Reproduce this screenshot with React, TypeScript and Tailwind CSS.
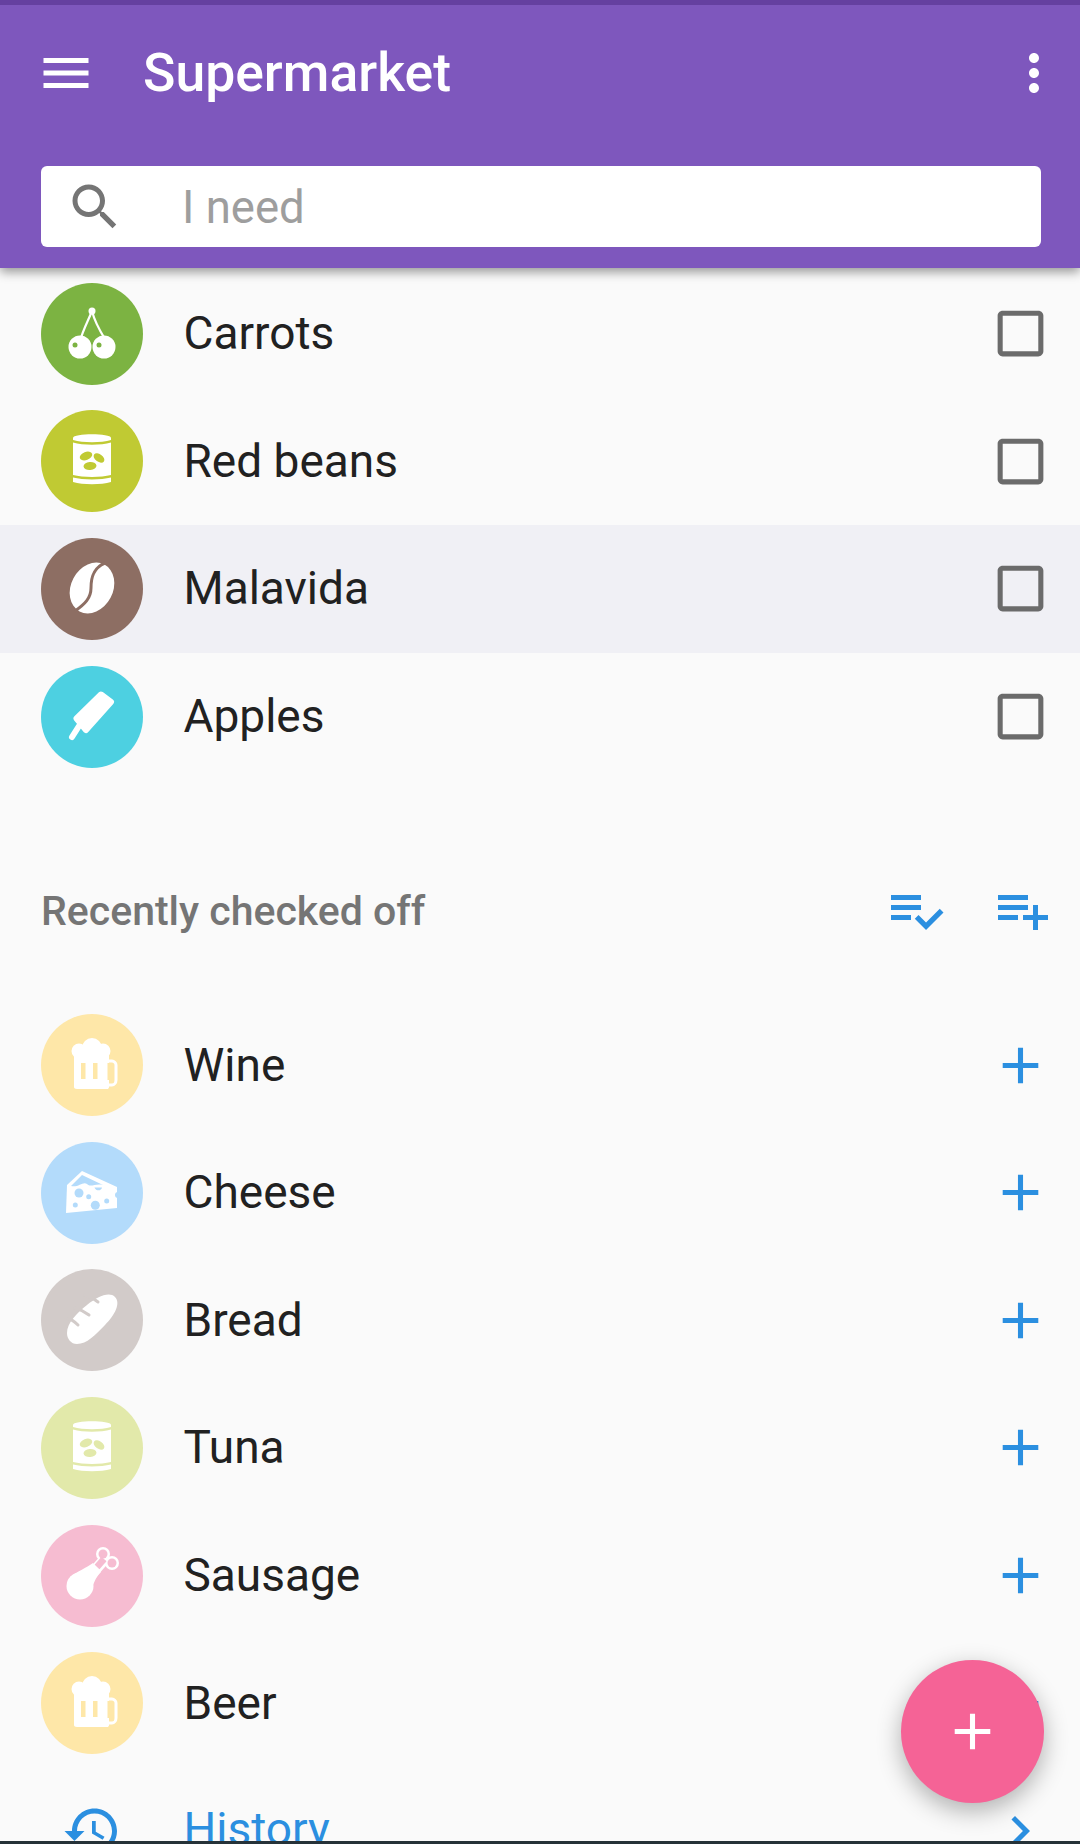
import React from 'react'

type IconProps = { d: string; className?: string }

// Material icon on a 24 unit grid
function Mi({ d, className }: IconProps) {
  return (
    <svg viewBox="0 0 24 24" className={className} fill="currentColor">
      <path d={d} />
    </svg>
  )
}

const ICONS = {
  menu: 'M3 18h18v-2H3v2zm0-5h18v-2H3v2zm0-7v2h18V6H3z',
  search:
    'M15.5 14h-.79l-.28-.27C15.41 12.59 16 11.11 16 9.5 16 5.91 13.09 3 9.5 3S3 5.91 3 9.5 5.91 16 9.5 16c1.61 0 3.09-.59 4.23-1.57l.27.28v.79l5 4.99L20.49 19l-4.99-5zm-6 0C7.01 14 5 11.99 5 9.5S7.01 5 9.5 5 14 7.01 14 9.5 11.99 14 9.5 14z',
  more: 'M12 8c1.1 0 2-.9 2-2s-.9-2-2-2-2 .9-2 2 .9 2 2 2zm0 2c-1.1 0-2 .9-2 2s.9 2 2 2 2-.9 2-2-.9-2-2-2zm0 6c-1.1 0-2 .9-2 2s.9 2 2 2 2-.9 2-2-.9-2-2-2z',
  box: 'M19 5v14H5V5h14m0-2H5c-1.1 0-2 .9-2 2v14c0 1.1.9 2 2 2h14c1.1 0 2-.9 2-2V5c0-1.1-.9-2-2-2z',
  add: 'M19 13h-6v6h-2v-6H5v-2h6V5h2v6h6v2z',
  listCheck:
    'M14 10H2v2h12v-2zm0-4H2v2h12V6zM2 16h8v-2H2v2zm19.5-4.5L23 13l-6.99 7-4.51-4.5L13 14l3.01 3 5.49-5.5z',
  listAdd: 'M14 10H2v2h12v-2zm0-4H2v2h12V6zm4 8v-4h-2v4h-4v2h4v4h2v-4h4v-2h-4zM2 16h8v-2H2v2z',
  history:
    'M13 3c-4.97 0-9 4.03-9 9H1l3.89 3.89.07.14L9 12H6c0-3.87 3.13-7 7-7s7 3.13 7 7-3.13 7-7 7c-1.93 0-3.68-.79-4.94-2.06l-1.42 1.42C8.27 19.99 10.51 21 13 21c4.97 0 9-4.03 9-9s-4.03-9-9-9zm-1 5v5l4.28 2.54.72-1.21-3.5-2.08V8H12z',
  chevron: 'M10 6L8.59 7.41 13.17 12l-4.58 4.59L10 18l6-6z',
}

type Food = 'cherry' | 'can' | 'coffee' | 'popsicle' | 'beer' | 'cheese' | 'bread' | 'drumstick'

function FoodShape({ food, bg }: { food: Food; bg: string }) {
  if (food === 'cherry') {
    return (
      <>
        <path d="M51 28C47 38 42 47 39 58M51 28C54 40 59 48 64 56" fill="none" stroke="#fff" strokeWidth="2.2" />
        <circle cx="51" cy="28" r="3.5" fill="#fff" />
        <circle cx="39" cy="64" r="11.5" fill="#fff" />
        <circle cx="63" cy="64" r="11.5" fill="#fff" />
        <circle cx="34" cy="62" r="2.5" fill={bg} />
        <circle cx="58" cy="62" r="2.5" fill={bg} />
      </>
    )
  }
  if (food === 'can') {
    return (
      <>
        <path d="M32 28C32 23 70 23 70 28V30C60 33 42 33 32 30Z" fill="#fff" />
        <path d="M32 32.5C42 35.5 60 35.5 70 32.5V65C60 67.5 42 67.5 32 65Z" fill="#fff" />
        <path d="M32 67.5C42 70 60 70 70 67.5V72C60 75 42 75 32 72Z" fill="#fff" />
        <ellipse cx="45" cy="46" rx="6.5" ry="4" fill={bg} transform="rotate(-20 45 46)" />
        <ellipse cx="58" cy="48" rx="6" ry="3.8" fill={bg} transform="rotate(35 58 48)" />
        <ellipse cx="49" cy="56" rx="6.5" ry="4" fill={bg} transform="rotate(-5 49 56)" />
      </>
    )
  }
  if (food === 'coffee') {
    return (
      <>
        <ellipse cx="51" cy="50" rx="21" ry="26.5" fill="#fff" transform="rotate(28 51 50)" />
        <path d="M64 25C52 30 50 40 50 50C50 60 44 66 34 73" fill="none" stroke={bg} strokeWidth="3" />
      </>
    )
  }
  if (food === 'popsicle') {
    return (
      <>
        <path d="M60 28.5L70 36L45 64L35.5 52.5Z" fill="#fff" stroke="#fff" strokeWidth="6" strokeLinejoin="round" />
        <path d="M38 60L31 71" stroke="#fff" strokeWidth="6" strokeLinecap="round" />
      </>
    )
  }
  if (food === 'beer') {
    return (
      <>
        <path d="M33 40H68V73C68 74.5 67 75 66 75H36C34 75 33 74 33 73Z" fill="#fff" />
        <circle cx="38" cy="37" r="7.5" fill="#fff" />
        <circle cx="51" cy="34" r="10" fill="#fff" />
        <circle cx="62" cy="37" r="7.5" fill="#fff" />
        <path d="M66 47H71C73 47 75 49 75 51V66C75 69 73 71 71 71H66" fill="none" stroke="#fff" strokeWidth="3" />
        <rect x="40" y="49" width="4.5" height="16" fill={bg} />
        <rect x="52" y="49" width="4.5" height="16" fill={bg} />
        <rect x="66.5" y="49" width="5" height="17" fill={bg} />
      </>
    )
  }
  if (food === 'cheese') {
    return (
      <>
        <path d="M25 71L26 43L41 29L76 45V66Z" fill="#fff" />
        <path d="M30 44L41 33L62 43C54 41 50 46 46 42C42 39 37 46 30 44Z" fill={bg} />
        <circle cx="38" cy="51" r="4.5" fill={bg} />
        <circle cx="47.7" cy="54.7" r="2.5" fill={bg} />
        <circle cx="54.3" cy="63.3" r="4.5" fill={bg} />
        <circle cx="34.3" cy="63" r="2.5" fill={bg} />
        <circle cx="65.7" cy="59" r="2.5" fill={bg} />
        <path d="M53.5 45.5H61C60.5 49 55 49.5 53.5 45.5Z" fill={bg} />
        <circle cx="77" cy="53" r="3" fill={bg} />
      </>
    )
  }
  if (food === 'bread') {
    return (
      <>
        <path d="M26 64C26 54 36 44 46 36C56 28 68 22 74 28C80 34 74 46 64 56C54 66 46 75 36 75C30 75 26 70 26 64Z" fill="#fff" />
        <path d="M27 50C30 50 34 53 37 56M34 39C38 40 44 43 48 46M44 26C48 27 53 30 57 33" fill="none" stroke={bg} strokeWidth="3" strokeLinecap="round" />
      </>
    )
  }
  return (
    <>
      {/* bone */}
      <path d="M48 52L62 36" stroke="#fff" strokeWidth="11" />
      <circle cx="62" cy="29" r="7" fill="#fff" />
      <circle cx="71" cy="38" r="7" fill="#fff" />
      <circle cx="62" cy="29" r="4.5" fill={bg} />
      <circle cx="71" cy="38" r="4.5" fill={bg} />
      <path d="M56 42L63 34" stroke={bg} strokeWidth="6.5" />
      {/* meat */}
      <circle cx="39" cy="61" r="13.5" fill="#fff" />
      <path d="M29 52C37 46 45 43 52 38L60 47C54 53 52 60 48 71Z" fill="#fff" />
    </>
  )
}

function FoodIcon({ food, bg }: { food: Food; bg: string }) {
  return (
    <svg viewBox="0 0 102 102" className="w-[102px] h-[102px] shrink-0">
      <circle cx="51" cy="51" r="51" fill={bg} />
      <FoodShape food={food} bg={bg} />
    </svg>
  )
}

function Row({
  name,
  food,
  bg,
  action,
  highlighted,
}: {
  name: string
  food: Food
  bg: string
  action: 'box' | 'add'
  highlighted?: boolean
}) {
  return (
    <div className={`flex items-center h-[127.6px] pl-[41px] pr-[29px] shrink-0 ${highlighted ? 'bg-[#f0f0f5]' : ''}`}>
      <FoodIcon food={food} bg={bg} />
      <span className="ml-[40.5px] flex-1 pb-[1px] text-[46px] leading-none text-[#212121]">{name}</span>
      {action === 'box' ? (
        <Mi d={ICONS.box} className="w-[61px] h-[61px] text-[#6b6b6b]" />
      ) : (
        <Mi d={ICONS.add} className="w-[61px] h-[61px] text-[#2b8fe0]" />
      )}
    </div>
  )
}

const toBuy: { name: string; food: Food; bg: string; highlighted?: boolean }[] = [
  { name: 'Carrots', food: 'cherry', bg: '#7cb342' },
  { name: 'Red beans', food: 'can', bg: '#c0ca33' },
  { name: 'Malavida', food: 'coffee', bg: '#8d6e63', highlighted: true },
  { name: 'Apples', food: 'popsicle', bg: '#4dd0e1' },
]

const checkedOff: { name: string; food: Food; bg: string }[] = [
  { name: 'Wine', food: 'beer', bg: '#fee7a8' },
  { name: 'Cheese', food: 'cheese', bg: '#b3dbfb' },
  { name: 'Bread', food: 'bread', bg: '#d2cbc9' },
  { name: 'Tuna', food: 'can', bg: '#e2e9aa' },
  { name: 'Sausage', food: 'drumstick', bg: '#f6bcd1' },
  { name: 'Beer', food: 'beer', bg: '#fee7a8' },
]

export default function App() {
  return (
    <div className="relative w-[1080px] h-[1844px] overflow-hidden bg-[#fafafa] font-[Roboto,sans-serif] flex flex-col">
      {/* Header */}
      <header className="relative z-10 h-[268px] shrink-0 bg-[#7e57bd] shadow-[0_4px_10px_rgba(0,0,0,0.4)]">
        <div className="h-[5px] bg-[#6540a0]" />
        <div className="flex items-center h-[136px] pl-[36px] pr-[16px] text-white">
          <Mi d={ICONS.menu} className="w-[60px] h-[60px]" />
          <span className="ml-[47px] flex-1 text-[53.5px] font-medium leading-none">Supermarket</span>
          <Mi d={ICONS.more} className="w-[60px] h-[60px]" />
        </div>
        <div className="mt-[25px] ml-[41px] mr-[39px] h-[81px] bg-white rounded-[6px] flex items-center pl-[24px]">
          <Mi d={ICONS.search} className="w-[60px] h-[60px] text-[#757575]" />
          <span className="ml-[57px] pt-[2px] text-[45.5px] leading-none text-[#9e9e9e]">I need</span>
        </div>
      </header>

      {/* List */}
      <main className="flex flex-col pt-[2px]">
        {toBuy.map((item) => (
          <Row key={item.name} {...item} action="box" />
        ))}

        <div className="mt-[65px] mb-[26px] h-[130px] flex items-center pl-[41px] pr-[27px] shrink-0">
          <span className="flex-1 pt-[2px] text-[41px] font-medium leading-none text-[#757575]">Recently checked off</span>
          <Mi d={ICONS.listCheck} className="w-[60px] h-[60px] text-[#2b8fe0]" />
          <Mi d={ICONS.listAdd} className="ml-[47px] w-[60px] h-[60px] text-[#2b8fe0]" />
        </div>

        {checkedOff.map((item) => (
          <Row key={item.name} {...item} action="add" />
        ))}

        <div className="flex items-center h-[127.6px] pl-[62px] pr-[30px] shrink-0 text-[#2b8fe0]">
          <Mi d={ICONS.history} className="w-[60px] h-[60px]" />
          <span className="ml-[61.5px] flex-1 pb-[4px] text-[46px] leading-none">History</span>
          <Mi d={ICONS.chevron} className="w-[60px] h-[60px]" />
        </div>
      </main>

      {/* FAB */}
      <button className="absolute z-20 left-[901px] top-[1660px] w-[143px] h-[143px] rounded-full bg-[#f56396] text-white flex items-center justify-center shadow-[0_8px_24px_rgba(0,0,0,0.3)]">
        <Mi d={ICONS.add} className="w-[61px] h-[61px]" />
      </button>

      {/* Bottom edge */}
      <div className="absolute z-30 left-0 right-0 bottom-0 h-[3px] bg-[#263238]" />
    </div>
  )
}
